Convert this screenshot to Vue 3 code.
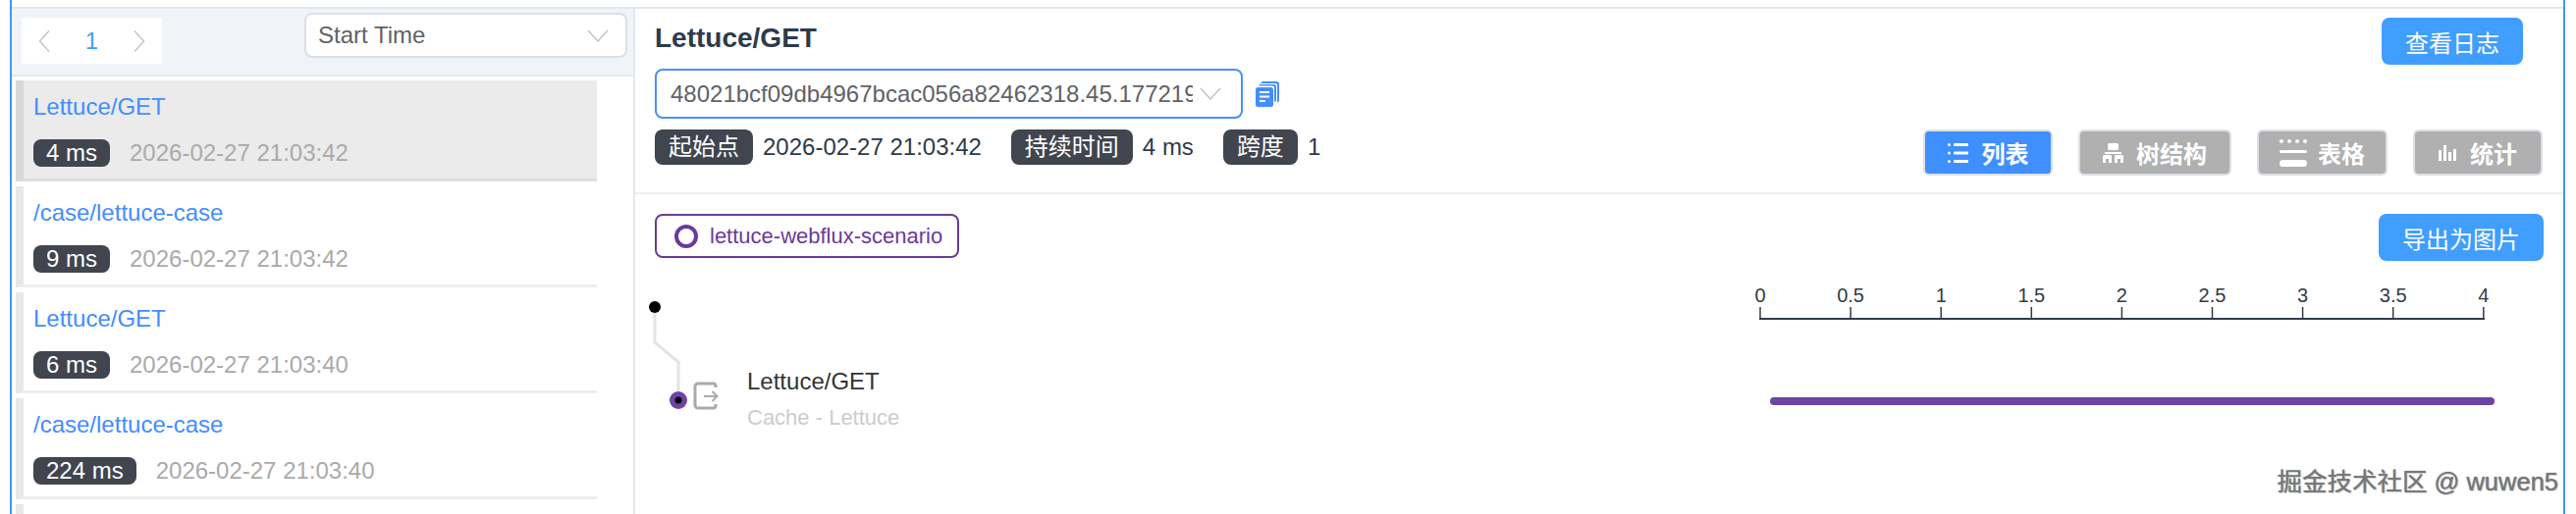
<script setup>
const traces = [
  { name: 'Lettuce/GET', ms: 4, time: '2026-02-27 21:03:42', active: true },
  { name: '/case/lettuce-case', ms: 9, time: '2026-02-27 21:03:42' },
  { name: 'Lettuce/GET', ms: 6, time: '2026-02-27 21:03:40' },
  { name: '/case/lettuce-case', ms: 224, time: '2026-02-27 21:03:40' },
  { name: '', ms: null, time: '' },
]

const ticks = ['0', '0.5', '1', '1.5', '2', '2.5', '3', '3.5', '4'].map((label, i) => ({
  label,
  x: 1146 + i * 92.1,
}))
</script>

<template>
  <div class="page">
    <div class="shell">
      <aside class="sidebar">
        <div class="side-head">
          <div class="pager">
            <svg class="pager-arrow" width="12" height="24" viewBox="0 0 12 24"><path d="M11 1.5 1.5 12 11 22.5" /></svg>
            <span class="pager-num">1</span>
            <svg class="pager-arrow" width="12" height="24" viewBox="0 0 12 24"><path d="M1 1.5 10.5 12 1 22.5" /></svg>
          </div>
          <div class="sort-select">
            <span>Start Time</span>
            <svg class="chevron" width="22" height="13" viewBox="0 0 22 13"><path d="M1 1l10 11L21 1" /></svg>
          </div>
        </div>
        <ul class="trace-list">
          <li v-for="(t, i) in traces" :key="i" class="trace-item" :class="{ active: t.active }">
            <template v-if="t.name">
              <div class="trace-name">{{ t.name }}</div>
              <div class="trace-info">
                <span class="tag">{{ t.ms }} ms</span>
                <span class="trace-time">{{ t.time }}</span>
              </div>
            </template>
          </li>
        </ul>
      </aside>

      <main class="main">
        <section class="detail">
          <div class="detail-left">
            <h1 class="title">Lettuce/GET</h1>
            <div class="select-row">
              <div class="trace-select">
                <span class="trace-id">48021bcf09db4967bcac056a82462318.45.17721966</span>
                <svg class="chevron" width="22" height="13" viewBox="0 0 22 13"><path d="M1 1l10 11L21 1" /></svg>
              </div>
              <svg class="copy" width="24" height="26" viewBox="0 0 24 26">
                <path d="M7 0h14a3 3 0 0 1 3 3v16a3 3 0 0 1-2 2.8V4a2 2 0 0 0-2-2H5.300A3 3 0 0 1 7 0z" fill="#448dfe" />
                <path d="M4.500 3h14a2.500 2.500 0 0 1 2.500 2.500V20l-2 1V6a1.500 1.500 0 0 0-1.500-1.500H3A2.500 2.500 0 0 1 4.500 3z" fill="#448dfe" />
                <path d="M2.500 6h13A2.500 2.500 0 0 1 18 8.500v15a2.500 2.500 0 0 1-2.500 2.500h-13A2.500 2.500 0 0 1 0 23.500v-15A2.500 2.500 0 0 1 2.500 6z" fill="#448dfe" />
                <path d="M4 11h10M4 15.500h10M4 20h6" stroke="#fff" stroke-width="2" />
              </svg>
            </div>
            <div class="meta">
              <span class="tag tag-lg">起始点</span><span class="meta-val">2026-02-27 21:03:42</span>
              <span class="tag tag-lg">持续时间</span><span class="meta-val">4 ms</span>
              <span class="tag tag-lg">跨度</span><span class="meta-val">1</span>
            </div>
          </div>
          <div class="detail-right">
            <button class="btn log-btn">查看日志</button>
            <div class="tabs">
              <button class="tab on">
                <svg width="21" height="22" viewBox="0 0 21 22" fill="#fff">
                  <circle cx="1.500" cy="2.500" r="1.500" /><circle cx="1.500" cy="11" r="1.500" /><circle cx="1.500" cy="19.500" r="1.500" />
                  <rect x="6" y="1" width="15" height="3" rx="1" /><rect x="6" y="9.500" width="15" height="3" rx="1" /><rect x="6" y="18" width="15" height="3" rx="1" />
                </svg>
                <span class="list-label">列表</span>
              </button>
              <button class="tab tree">
                <svg width="21" height="20" viewBox="0 0 21 20" fill="#fff">
                  <rect x="5" y="0" width="11" height="7" rx="1.500" />
                  <path d="M2 9h17v2H2z" />
                  <path d="M1.500 12h6A1.500 1.500 0 0 1 9 13.500V20H6v-4H3v4H0v-6.500A1.500 1.500 0 0 1 1.500 12zM13.500 12h6a1.500 1.500 0 0 1 1.500 1.500V20h-3v-4h-3v4h-3v-6.500a1.500 1.500 0 0 1 1.500-1.500z" />
                </svg>
                <span>树结构</span>
              </button>
              <button class="tab table">
                <svg width="28" height="28" viewBox="0 0 28 28" fill="#fff">
                  <circle cx="2" cy="2" r="2" /><circle cx="10" cy="2" r="2" /><circle cx="18" cy="2" r="2" /><circle cx="26" cy="2" r="2" />
                  <rect x="0" y="11" width="28" height="3" rx="1.500" />
                  <rect x="0" y="21" width="28" height="7" rx="3.500" />
                </svg>
                <span>表格</span>
              </button>
              <button class="tab stats">
                <svg width="19" height="16" viewBox="0 0 19 16" fill="#fff">
                  <rect x="0" y="5" width="3" height="11" /><rect x="5" y="0" width="3" height="16" />
                  <rect x="10" y="7" width="3" height="9" /><rect x="15" y="4" width="3" height="12" />
                </svg>
                <span>统计</span>
              </button>
            </div>
          </div>
        </section>

        <div class="toolbar">
          <div class="service">
            <i class="service-dot"></i>
            <span>lettuce-webflux-scenario</span>
          </div>
          <button class="btn">导出为图片</button>
        </div>

        <svg class="chart" width="1964" height="244" viewBox="0 0 1964 244">
          <path d="M20 34V70L44 90V122" fill="none" stroke="#e4e4e4" stroke-width="3" />
          <circle cx="20" cy="34" r="6" fill="#000" />
          <circle cx="44" cy="129" r="9" fill="#6f42a4" />
          <circle cx="44" cy="129" r="3.500" fill="#000" />
          <path d="M82 116v-1.500a2.500 2.500 0 0 0-2.500-2.500H64a3 3 0 0 0-3 3v19a3 3 0 0 0 3 3h15.500a2.500 2.500 0 0 0 2.500-2.500V133" fill="none" stroke="#aaa" stroke-width="3" />
          <path d="M70 125h13M78.500 120l5 5-5 5" fill="none" stroke="#aaa" stroke-width="2" />
          <text x="114" y="118" class="span-name">Lettuce/GET</text>
          <text x="114" y="154" class="span-sub">Cache - Lettuce</text>

          <g v-for="t in ticks" :key="t.label">
            <line :x1="t.x" :x2="t.x" y1="34" y2="46" stroke="#2f3b4a" stroke-width="1.500" />
            <text :x="t.x" y="29" class="tick">{{ t.label }}</text>
          </g>
          <line x1="1145" x2="1884" y1="46" y2="46" stroke="#2f3b4a" stroke-width="2" />
          <rect x="1156" y="126" width="738" height="8" rx="4" fill="#6f42a4" />
        </svg>
      </main>
    </div>
    <div class="watermark">掘金技术社区 @ wuwen5</div>
  </div>
</template>

<style>
html,
body {
  margin: 0;
  background: #fff;
}
</style>

<style scoped>
.page {
  position: relative;
  width: 2624px;
  height: 524px;
  overflow: hidden;
  background: #fff;
  font-family: "Liberation Sans", "Noto Sans CJK SC", sans-serif;
  font-size: 24px;
}

.shell {
  box-sizing: border-box;
  display: flex;
  width: 2603px;
  height: 524px;
  margin-left: 10px;
  padding-top: 7px;
  border-left: 2px solid #4a90f5;
  border-right: 2px solid #4a90f5;
}

.sidebar {
  flex: none;
  box-sizing: border-box;
  width: 635px;
  border-top: 2px solid #e4e7ed;
  border-right: 2px solid #e4e7ed;
}

.side-head {
  box-sizing: border-box;
  display: flex;
  justify-content: space-between;
  height: 69px;
  padding: 4px 6px 0 10px;
  background: #f0f3f8;
  border-bottom: 2px solid #e4e7ed;
}

.pager {
  display: flex;
  align-items: center;
  justify-content: space-between;
  box-sizing: border-box;
  width: 143px;
  height: 47px;
  margin-top: 5px;
  padding: 0 17px;
  background: #fff;
}

.pager-arrow path {
  fill: none;
  stroke: #c0c4cc;
  stroke-width: 1.500;
}

.pager-num {
  color: #409eff;
}

.sort-select {
  box-sizing: border-box;
  display: flex;
  align-items: center;
  justify-content: space-between;
  width: 329px;
  height: 46px;
  padding: 0 17px 0 12px;
  background: #fff;
  border: 2px solid #dcdfe6;
  border-radius: 8px;
  color: #606266;
}

.chevron path {
  fill: none;
  stroke: #c0c4cc;
  stroke-width: 1.500;
}

.trace-list {
  list-style: none;
  width: 592px;
  margin: 4px 0 0 4px;
  padding: 0;
}

.trace-item {
  box-sizing: border-box;
  height: 103px;
  margin-bottom: 5px;
  padding: 12px 0 0 10px;
  border-left: 8px solid #e8e8e8;
  border-bottom: 3px solid #eee;
}

.trace-item.active {
  background: #ebebeb;
  border-left-color: #d8d8d8;
  border-bottom-color: #ddd;
}

.trace-name {
  height: 30px;
  line-height: 30px;
  color: #448dfe;
}

.trace-info {
  display: flex;
  align-items: center;
  margin-top: 18px;
}

.tag {
  flex: none;
  box-sizing: border-box;
  height: 28px;
  padding: 0 13px;
  border-radius: 8px;
  background: #40454f;
  color: #fff;
  line-height: 28px;
}

.tag-lg {
  height: 36px;
  padding: 0 14px;
  line-height: 36px;
}

.trace-time {
  margin-left: 20px;
  color: #aaa;
}

.main {
  flex: 1;
  min-width: 0;
}

.detail {
  box-sizing: border-box;
  display: flex;
  justify-content: space-between;
  height: 191px;
  padding-left: 20px;
  border-top: 2px solid #e4e7ed;
  border-bottom: 2px solid #eee;
}

.title {
  margin: 12px 0 13px;
  color: #2d3a4b;
  font-size: 28px;
  font-weight: 700;
  line-height: 36px;
}

.select-row {
  display: flex;
  align-items: center;
}

.trace-select {
  box-sizing: border-box;
  display: flex;
  align-items: center;
  width: 599px;
  height: 51px;
  padding: 0 20px 0 14px;
  border: 2px solid #4a90f5;
  border-radius: 8px;
  color: #606266;
}

.trace-id {
  width: 532px;
  overflow: hidden;
  white-space: nowrap;
}

.trace-select .chevron {
  margin-left: auto;
}

.copy {
  margin-left: 13px;
}

.meta {
  display: flex;
  align-items: center;
  margin-top: 11px;
  color: #2d3a4b;
}

.meta-val {
  margin: 0 30px 0 10px;
}

.detail-right {
  display: flex;
  flex-direction: column;
  align-items: flex-end;
  padding: 9px 21px 17px 0;
}

.btn {
  flex: none;
  height: 48px;
  padding: 0 24px;
  border: 0;
  border-radius: 8px;
  background: #409eff;
  color: #fff;
  font: inherit;
}

.log-btn {
  margin-right: 20px;
}

.tabs {
  display: flex;
  gap: 26px;
  margin-top: auto;
}

.tab {
  box-sizing: border-box;
  display: flex;
  align-items: center;
  justify-content: center;
  width: 132px;
  height: 47px;
  padding: 0;
  border: 2px solid #dcdfe6;
  border-radius: 6px;
  background: #b0b0b0;
  color: #fff;
  font: inherit;
  font-weight: 700;
}

.tab span {
  margin-left: 13px;
}

.tab .list-label {
  margin-left: 14px;
}

.tab.on {
  width: 132px;
  background: #3f8fff;
}

.tab.tree {
  width: 156px;
}

.tab.table {
  width: 133px;
}

.tab.table span {
  margin-left: 11px;
}

.toolbar {
  display: flex;
  align-items: flex-start;
  justify-content: space-between;
  height: 61px;
  padding: 20px 20px 0;
}

.service {
  box-sizing: border-box;
  display: flex;
  align-items: center;
  width: 310px;
  height: 45px;
  padding-left: 18px;
  border: 2px solid #6a3a9c;
  border-radius: 8px;
  color: #6a3a9c;
  font-size: 22px;
}

.service-dot {
  box-sizing: border-box;
  flex: none;
  width: 24px;
  height: 24px;
  margin-right: 12px;
  border: 4px solid #6a3a9c;
  border-radius: 50%;
}

.chart {
  display: block;
}

.span-name {
  fill: #333;
  font-size: 24px;
}

.span-sub {
  fill: #ccc;
  font-size: 22px;
}

.tick {
  fill: #333a45;
  font-size: 20px;
  text-anchor: middle;
}

.watermark {
  position: absolute;
  right: 18px;
  top: 476px;
  color: #777;
  font-size: 25.5px;
  line-height: 30px;
  white-space: nowrap;
  text-shadow: 0 0 1px #777, 1px 1px 0 #ddd;
}
</style>
